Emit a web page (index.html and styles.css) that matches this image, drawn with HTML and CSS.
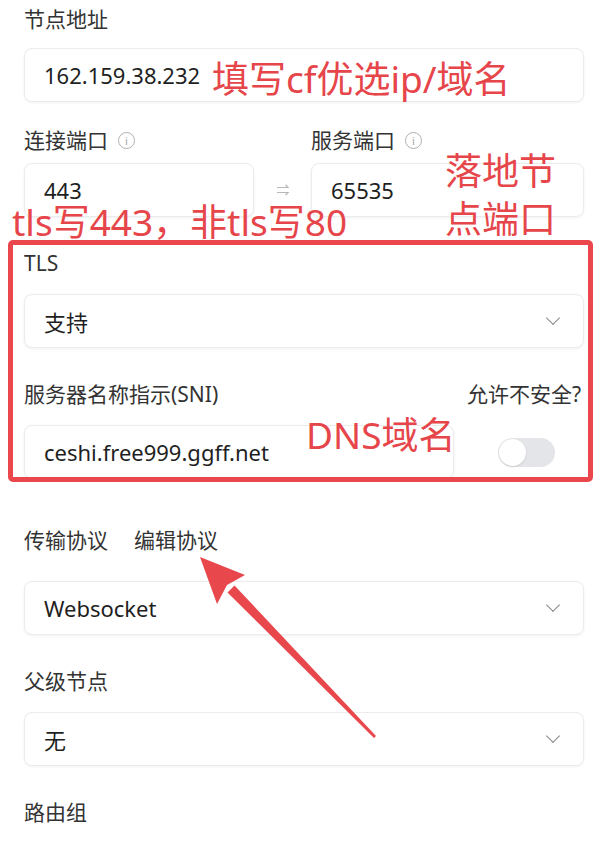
FILE: index.html
```html
<!DOCTYPE html>
<html lang="zh-CN">
<head>
    <meta charset="UTF-8">
    <meta name="viewport" content="width=device-width, initial-scale=1.0">
    <title>节点设置</title>
    <link rel="stylesheet" href="styles.css">
</head>
<body>
    <div class="page">
        <div class="field field-first">
            <div class="label">节点地址</div>
            <div class="input">162.159.38.232</div>
        </div>

        <div class="field field-ports">
            <div class="ports">
                <div class="label">连接端口 <span class="info">i</span></div>
                <div></div>
                <div class="label">服务端口 <span class="info">i</span></div>
                <div class="input">443</div>
                <div class="swap">
                    <svg width="14" height="12" viewBox="0 0 14 12"><path d="M1 3.5H12L9.5 1M1 8.5H12L9.5 11" fill="none" stroke="#b8b8b8" stroke-width="1.2"/></svg>
                </div>
                <div class="input">65535</div>
            </div>
        </div>

        <div class="field">
            <div class="label">TLS</div>
            <div class="input select">支持<span class="chevron"></span></div>
        </div>

        <div class="field">
            <div class="sni">
                <div class="label">服务器名称指示(SNI)</div>
                <div class="label">允许不安全?</div>
                <div class="input">ceshi.free999.ggff.net</div>
                <div class="toggle-cell"><span class="toggle"></span></div>
            </div>
        </div>

        <div class="field field-transport">
            <div class="label">传输协议 <span class="link">编辑协议</span></div>
            <div class="input select">Websocket<span class="chevron"></span></div>
        </div>

        <div class="field">
            <div class="label">父级节点</div>
            <div class="input select">无<span class="chevron"></span></div>
        </div>

        <div class="field">
            <div class="label">路由组</div>
        </div>

        <!-- annotations drawn over the form -->
        <div class="note note-ip">填写cf优选ip/域名</div>
        <div class="note note-port">落地节<br>点端口</div>
        <div class="note note-tls">tls写443，非tls写80</div>
        <div class="note note-dns">DNS域名</div>
        <div class="frame"></div>
        <svg class="arrow" width="606" height="841" viewBox="0 0 606 841">
            <polygon points="234.5,585.5 227.5,592.5 374,738 376,736" fill="#e8474c"/>
            <polygon points="200,557 245,575 227,585 217,604" fill="#e8474c"/>
        </svg>
    </div>
</body>
</html>
```

FILE: styles.css
```css
body {
    margin: 0;
    background-color: #ffffff;
    font-family: 'Noto Sans', 'Noto Sans CJK SC', sans-serif;
    color: #333333;
}

.page {
    position: relative;
    width: 606px;
    height: 841px;
    padding: 5px 22px 0 24px;
    box-sizing: border-box;
    overflow: hidden;
}

.field {
    margin-top: 32px;
}

.field-first {
    margin-top: 0;
}

.field-ports {
    margin-top: 24px;
}

.field-transport {
    margin-top: 47px;
}

.label {
    font-size: 21px;
    line-height: 28px;
    height: 28px;
    margin-bottom: 17px;
    white-space: nowrap;
    display: flex;
    align-items: center;
}

.field-first .label {
    margin-bottom: 15px;
}

.field-transport .label {
    margin-bottom: 27px;
}

.input {
    height: 54px;
    box-sizing: border-box;
    border: 1px solid #ececec;
    border-radius: 8px;
    box-shadow: 0 1px 3px rgba(0, 0, 0, 0.06);
    padding: 0 19px;
    display: flex;
    align-items: center;
    font-size: 22px;
    color: #1f1f1f;
    background-color: #ffffff;
}

.select {
    justify-content: space-between;
}

.chevron {
    width: 9px;
    height: 9px;
    border-right: 1.5px solid #8a8a8a;
    border-bottom: 1.5px solid #8a8a8a;
    transform: rotate(45deg);
    margin: -6px 6px 0 0;
}

.info {
    display: inline-flex;
    justify-content: center;
    align-items: center;
    width: 15px;
    height: 15px;
    margin-left: 10px;
    border: 1px solid #b0b0b0;
    border-radius: 50%;
    font-size: 11px;
    line-height: 1;
    color: #a8a8a8;
}

.ports {
    display: grid;
    grid-template-columns: 230px 57px 1fr;
}

.ports .label {
    margin-bottom: 9px;
}

.swap {
    display: flex;
    justify-content: center;
    align-items: center;
}

.sni {
    display: grid;
    grid-template-columns: 430px 1fr;
    column-gap: 13px;
}

.toggle-cell {
    display: flex;
    align-items: center;
    padding-left: 31px;
}

.toggle {
    position: relative;
    width: 57px;
    height: 29px;
    border-radius: 15px;
    background-color: #e3e5e9;
}

.toggle::after {
    content: '';
    position: absolute;
    left: 1px;
    top: 1px;
    width: 27px;
    height: 27px;
    border-radius: 50%;
    background-color: #ffffff;
    box-shadow: 0 1px 2px rgba(0, 0, 0, 0.12);
}

.link {
    margin-left: 26px;
}

.note {
    position: absolute;
    font-family: 'Noto Sans', 'Noto Sans CJK SC', sans-serif;
    font-size: 37px;
    line-height: 44px;
    color: #e6454a;
    white-space: nowrap;
}

.note-ip {
    left: 212px;
    top: 57px;
}

.note-port {
    left: 445px;
    top: 147px;
    line-height: 48px;
}

.note-tls {
    left: 12px;
    top: 200px;
}

.note-dns {
    left: 306px;
    top: 413px;
}

.frame {
    position: absolute;
    left: 8px;
    top: 240px;
    width: 585px;
    height: 242px;
    box-sizing: border-box;
    border: 5px solid #e9474c;
    border-radius: 5px;
}

.arrow {
    position: absolute;
    left: 0;
    top: 0;
}
```
